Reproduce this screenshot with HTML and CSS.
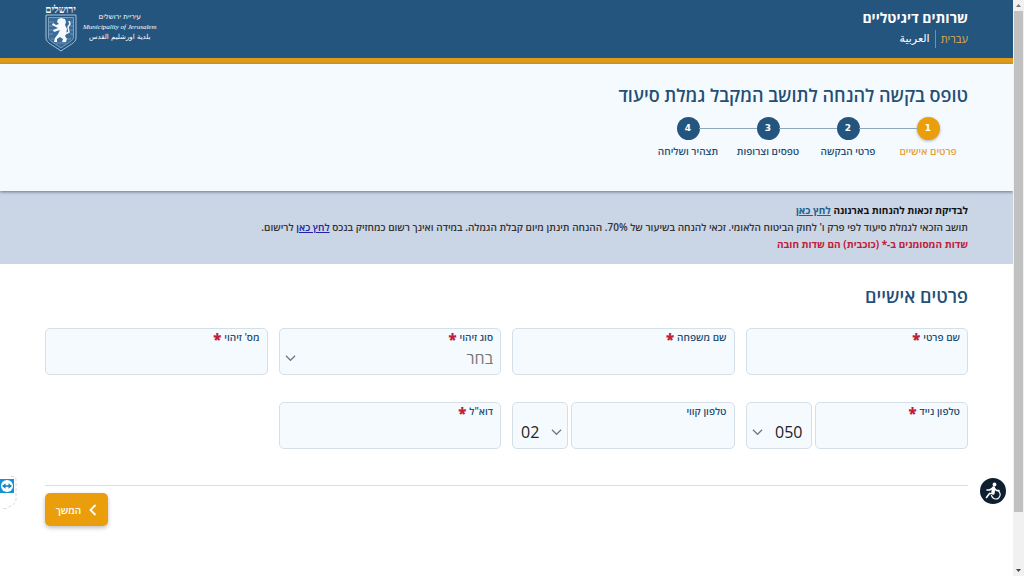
FILE: index.html
```html
<!DOCTYPE html>
<html lang="he" dir="rtl">
<head>
<meta charset="utf-8">
<meta name="viewport" content="width=device-width, initial-scale=1">
<title>שרותים דיגיטליים</title>
<link rel="stylesheet" href="styles.css">
</head>
<body>
<div class="scrollbar" aria-hidden="true">
  <svg class="scroll-arrow" viewBox="0 0 11 11"><path d="M3 7l2.500-3 2.500 3z" fill="#777"/></svg>
  <div class="scroll-thumb"></div>
  <svg class="scroll-arrow" viewBox="0 0 11 11"><path d="M3 4l2.500 3 2.500-3z" fill="#444"/></svg>
</div>
<div class="page">
  <header class="topbar">
    <div class="site">
      <div class="site-name">שרותים דיגיטליים</div>
      <nav class="langs">
        <a class="lang lang-active" href="#he">עברית</a>
        <a class="lang lang-ar" href="#ar" lang="ar">العربية</a>
      </nav>
    </div>
    <div class="brand">
      <div class="brand-names">
        <span>עיריית ירושלים</span>
        <span class="brand-en" lang="en" dir="ltr">Municipality of Jerusalem</span>
        <span lang="ar">بلدية اورشليم القدس</span>
      </div>
      <div class="emblem">
        <span class="emblem-name">ירושלים</span>
        <svg class="shield" viewBox="0 0 32 38" fill="none" aria-hidden="true">
          <path d="M1 1h30v23c0 5-7 7-15 13C8 31 1 29 1 24z" stroke="#a9c4da" stroke-width="1"/>
          <path d="M3.500 3.500h25V23c0 4-6 6-12.500 11C9.500 29 3.500 27 3.500 23z" fill="#3b6c98" stroke="#8fb0cb" stroke-width=".8"/>
          <path d="M4 8h5M4 12h4M4 16h5M4 20h4M24 8h4M25 12h3M25 16h3M25 20h3M6 25h4M22 25h4M11 29h10" stroke="#7fa3c2" stroke-width=".7"/>
          <path d="M13 5l3-1 4 1 1 3-1 3 2 4-1 5-1 2 2 3-1 3h-4l1-3-3-2-3 2v3H9l1-4 3-4 2-4-3 1-3 1-1-2 5-2-4-2-2-1 1-2 3 2 3-1-2-2z" fill="#f5faff"/>
          <path d="M20 20l4-2-1-5 2-3-1-3" stroke="#f5faff" stroke-width="1.500"/>
        </svg>
      </div>
    </div>
  </header>

  <section class="intro">
    <h1 class="form-title">טופס בקשה להנחה לתושב המקבל גמלת סיעוד</h1>
    <ol class="steps">
      <li class="step step-current"><span class="step-num">1</span><span>פרטים אישיים</span></li>
      <li class="step"><span class="step-num">2</span><span>פרטי הבקשה</span></li>
      <li class="step"><span class="step-num">3</span><span>טפסים וצרופות</span></li>
      <li class="step"><span class="step-num">4</span><span>תצהיר ושליחה</span></li>
    </ol>
  </section>

  <section class="notice">
    <p class="notice-lead">לבדיקת זכאות להנחות בארנונה <a class="notice-link" href="#check">לחץ כאן</a></p>
    <p class="notice-body">תושב הזכאי לגמלת סיעוד לפי פרק ו' לחוק הביטוח הלאומי. זכאי להנחה בשיעור של 70%. ההנחה תינתן מיום קבלת הגמלה. במידה ואינך רשום כמחזיק בנכס <a class="register-link" href="#register">לחץ כאן</a> לרישום.</p>
    <p class="notice-required">שדות המסומנים ב-* (כוכבית) הם שדות חובה</p>
  </section>

  <main class="content">
    <h2 class="section-title">פרטים אישיים</h2>
    <form class="form">
      <div class="fields">
        <div class="field">
          <label for="first">שם פרטי <b class="star">*</b></label>
          <input id="first" type="text">
        </div>
        <div class="field">
          <label for="last">שם משפחה <b class="star">*</b></label>
          <input id="last" type="text">
        </div>
        <div class="field">
          <label for="idtype">סוג זיהוי <b class="star">*</b></label>
          <select id="idtype" class="placeholder"><option>בחר</option></select>
          <svg class="chevron" viewBox="0 0 12 8"><path d="M1 1.500l5 5 5-5"/></svg>
        </div>
        <div class="field">
          <label for="idnum">מס' זיהוי <b class="star">*</b></label>
          <input id="idnum" type="text">
        </div>
        <div class="phone">
          <div class="field">
            <label for="mobile">טלפון נייד <b class="star">*</b></label>
            <input id="mobile" type="tel">
          </div>
          <div class="field prefix">
            <select aria-label="קידומת נייד"><option>050</option></select>
            <svg class="chevron" viewBox="0 0 12 8"><path d="M1 1.500l5 5 5-5"/></svg>
          </div>
        </div>
        <div class="phone">
          <div class="field">
            <label for="land">טלפון קווי</label>
            <input id="land" type="tel">
          </div>
          <div class="field prefix prefix-land">
            <select aria-label="קידומת קווי"><option>02</option></select>
            <svg class="chevron" viewBox="0 0 12 8"><path d="M1 1.500l5 5 5-5"/></svg>
          </div>
        </div>
        <div class="field">
          <label for="email">דוא"ל <b class="star">*</b></label>
          <input id="email" type="email">
        </div>
      </div>
      <div class="actions">
        <button class="next" type="submit">
          <svg class="next-icon" viewBox="0 0 8 12"><path d="M6.500 1L1.500 6l5 5"/></svg>
          <span>המשך</span>
        </button>
      </div>
    </form>
  </main>
</div>

<button class="access" aria-label="נגישות">
  <svg viewBox="0 0 26 26" fill="none" stroke="#fff" stroke-linecap="round" stroke-linejoin="round">
    <circle cx="14.500" cy="6.500" r="1.900" fill="#fff" stroke="none"/>
    <path d="M13.500 10l-.5 5" stroke-width="3.400"/>
    <path d="M12.500 15.500H9.500l-3 4M13 10l-3.500 2H7M14.500 10.500l2 2H19" stroke-width="1.600"/>
    <path d="M17.500 12.500a4.400 4.400 0 1 1-6 5" stroke-width="1.200"/>
  </svg>
</button>
<button class="remote" aria-label="תמיכה מרחוק">
  <svg viewBox="0 0 17 34">
    <path d="M0 .5h13a3 3 0 0 1 3 3v20q0 3-3 5l-7 4H0" fill="#fff"/>
    <path d="M11 .5h2a3 3 0 0 1 3 3v20q0 3-3 5l-7 4H3" fill="none" stroke="#c9cdd3" stroke-width=".8" stroke-dasharray="3 2"/>
    <path d="M0 3h14v14H0z" fill="#1592d6"/>
    <circle cx="7" cy="10" r="6" fill="#fff"/>
    <path d="M2 10l3.500-2.700v1.900h3V7.300L12 10l-3.500 2.700v-1.900h-3v1.900z" fill="#1580c0"/>
  </svg>
</button>
</body>
</html>
```
FILE: styles.css
```css
* { box-sizing: border-box; }

body {
  margin: 0;
  min-height: 100vh;
  display: flex;
  background: #fff;
  color: #222;
  font-family: "Open Sans", "Liberation Sans", sans-serif;
  font-size: 10px;
}

h1, h2, p, ol { margin: 0; padding: 0; }

.page { flex: 1; min-width: 0; }

/* Scroll gutter */
.scrollbar {
  width: 11px;
  height: 100vh;
  position: sticky;
  top: 0;
  z-index: 1;
  display: flex;
  flex-direction: column;
  background: #f1f1f1;
}
.scroll-arrow { width: 11px; height: 11px; }
.scroll-thumb { flex: 0 0 87%; margin: 0 1px auto; background: #c1c1c1; }

/* Header */
.topbar {
  display: flex;
  justify-content: space-between;
  align-items: flex-start;
  height: 64px;
  padding: 6px 45px 0;
  background: #24557f;
  border-bottom: 6px solid #dd9b1c;
  color: #fff;
}
.site-name { font-size: 14px; line-height: 24px; font-weight: 700; }
.langs { display: flex; align-items: center; line-height: 18px; }
.lang { color: #fff; text-decoration: none; font-size: 11px; }
.lang-active { color: #e3a948; padding-left: 5px; border-left: 1px solid #6d91b0; }
.lang-ar { padding-right: 5px; font-family: "DejaVu Sans", sans-serif; }

.brand { display: flex; gap: 7px; align-items: flex-start; }
.brand-names {
  display: flex;
  flex-direction: column;
  align-items: center;
  padding-top: 6px;
  font-family: "DejaVu Sans", sans-serif;
  font-size: 7px;
  line-height: 10px;
}
.brand-en { font-family: "Liberation Serif", serif; font-style: italic; font-size: 7px; }
.emblem { display: flex; flex-direction: column; align-items: center; width: 31px; }
.emblem-name { font-family: "Liberation Serif", serif; font-size: 10px; line-height: 8px; font-weight: 700; }
.shield { width: 32px; height: 38px; }

/* Title and steps */
.intro {
  position: relative;
  padding: 18px 45px 32px;
  background: #f5fafe;
  box-shadow: 0 1px 3px rgba(40, 55, 80, .6);
}
.form-title { color: #244f75; font-size: 18px; line-height: 26px; font-weight: 600; }
.steps { display: flex; margin: 9px 0 0; list-style: none; }
.step {
  position: relative;
  display: flex;
  flex-direction: column;
  align-items: center;
  width: 80px;
  gap: 4px;
  padding-bottom: 1px;
  color: #244f75;
  font-size: 10px;
  line-height: 14px;
  white-space: nowrap;
  font-weight: 600;
}
.step + .step::before {
  content: "";
  position: absolute;
  top: 11px;
  right: -29px;
  width: 58px;
  height: 1px;
  background: #8da9bc;
}
.step-num {
  width: 23px;
  height: 23px;
  border-radius: 50%;
  background: #24557f;
  color: #fff;
  font: 700 9px/22px "DejaVu Sans", sans-serif;
  text-align: center;
}
.step-current { color: #e5a13a; }
.step-current .step-num { background: #eb9e0c; box-shadow: 0 1px 3px rgba(0, 0, 0, .3); }

/* Notice */
.notice { padding: 11px 45px; background: #cad5e5; line-height: 17px; }
.notice-lead, .notice-required { font-weight: 700; }
.notice-lead { color: #111; }
.notice-body { color: #333; font-weight: 600; }
.notice-link { color: #24618f; }
.register-link { color: #2222a4; }
.notice-required { color: #c0203a; }

/* Form */
.content { padding: 19px 45px 50px; }
.section-title { color: #244f75; font-size: 18px; line-height: 26px; font-weight: 600; }
.fields {
  display: grid;
  grid-template-columns: repeat(4, minmax(0, 1fr));
  gap: 27px 11px;
  margin-top: 19px;
}
.field {
  position: relative;
  flex: 1;
  min-width: 0;
  height: 47px;
  padding: 1px 7px 0;
  border: 1px solid #d5dfe8;
  border-radius: 5px;
  background: #f5fafe;
}
.field label {
  display: flex;
  gap: 3px;
  color: #244f75;
  font-weight: 600;
  line-height: 14px;
}
.star { color: #c0203a; font-size: 15px; line-height: 18px; height: 14px; }
.field input, .field select {
  display: block;
  width: 100%;
  height: 28px;
  margin: 0;
  padding: 0;
  border: 0;
  outline: 0;
  background: transparent;
  color: #222;
  font: 16px/24px "Open Sans", sans-serif;
  appearance: none;
}
.field .placeholder { color: #777; }
.chevron {
  position: absolute;
  left: 5px;
  bottom: 12px;
  width: 11px;
  height: 8px;
  fill: none;
  stroke: #6f7780;
  stroke-width: 1.3;
  pointer-events: none;
}
.phone { display: flex; gap: 3px; }
.prefix { flex: 0 0 66px; display: flex; align-items: flex-end; padding: 0 8px 2px; }
.prefix-land { flex-basis: 56px; }
.prefix-land select { direction: ltr; text-align: left; }
.prefix-land .chevron { left: auto; right: 5px; }

.actions { display: flex; justify-content: flex-end; margin-top: 36px; padding-top: 7px; border-top: 1px solid #dcdfe2; }
.next {
  display: flex;
  align-items: center;
  justify-content: center;
  gap: 8px;
  min-width: 63px;
  height: 33px;
  padding: 0 10px;
  border: 0;
  border-radius: 5px;
  background: #eb9e0c;
  box-shadow: 0 2px 4px rgba(0, 0, 0, .25);
  color: #fff;
  font: 600 10px/16px "Open Sans", sans-serif;
}
.next-icon { width: 8px; height: 12px; fill: none; stroke: #fff; stroke-width: 1.8; }

/* Floating tools */
.access {
  position: fixed;
  right: 18px;
  bottom: 72px;
  width: 26px;
  height: 26px;
  padding: 0;
  border: 0;
  border-radius: 50%;
  background: #0e1f30;
}
.access svg, .remote svg { display: block; width: 100%; height: 100%; }
.remote {
  position: fixed;
  left: 0;
  bottom: 66px;
  width: 17px;
  height: 34px;
  padding: 0;
  border: 0;
  background: none;
}
```
